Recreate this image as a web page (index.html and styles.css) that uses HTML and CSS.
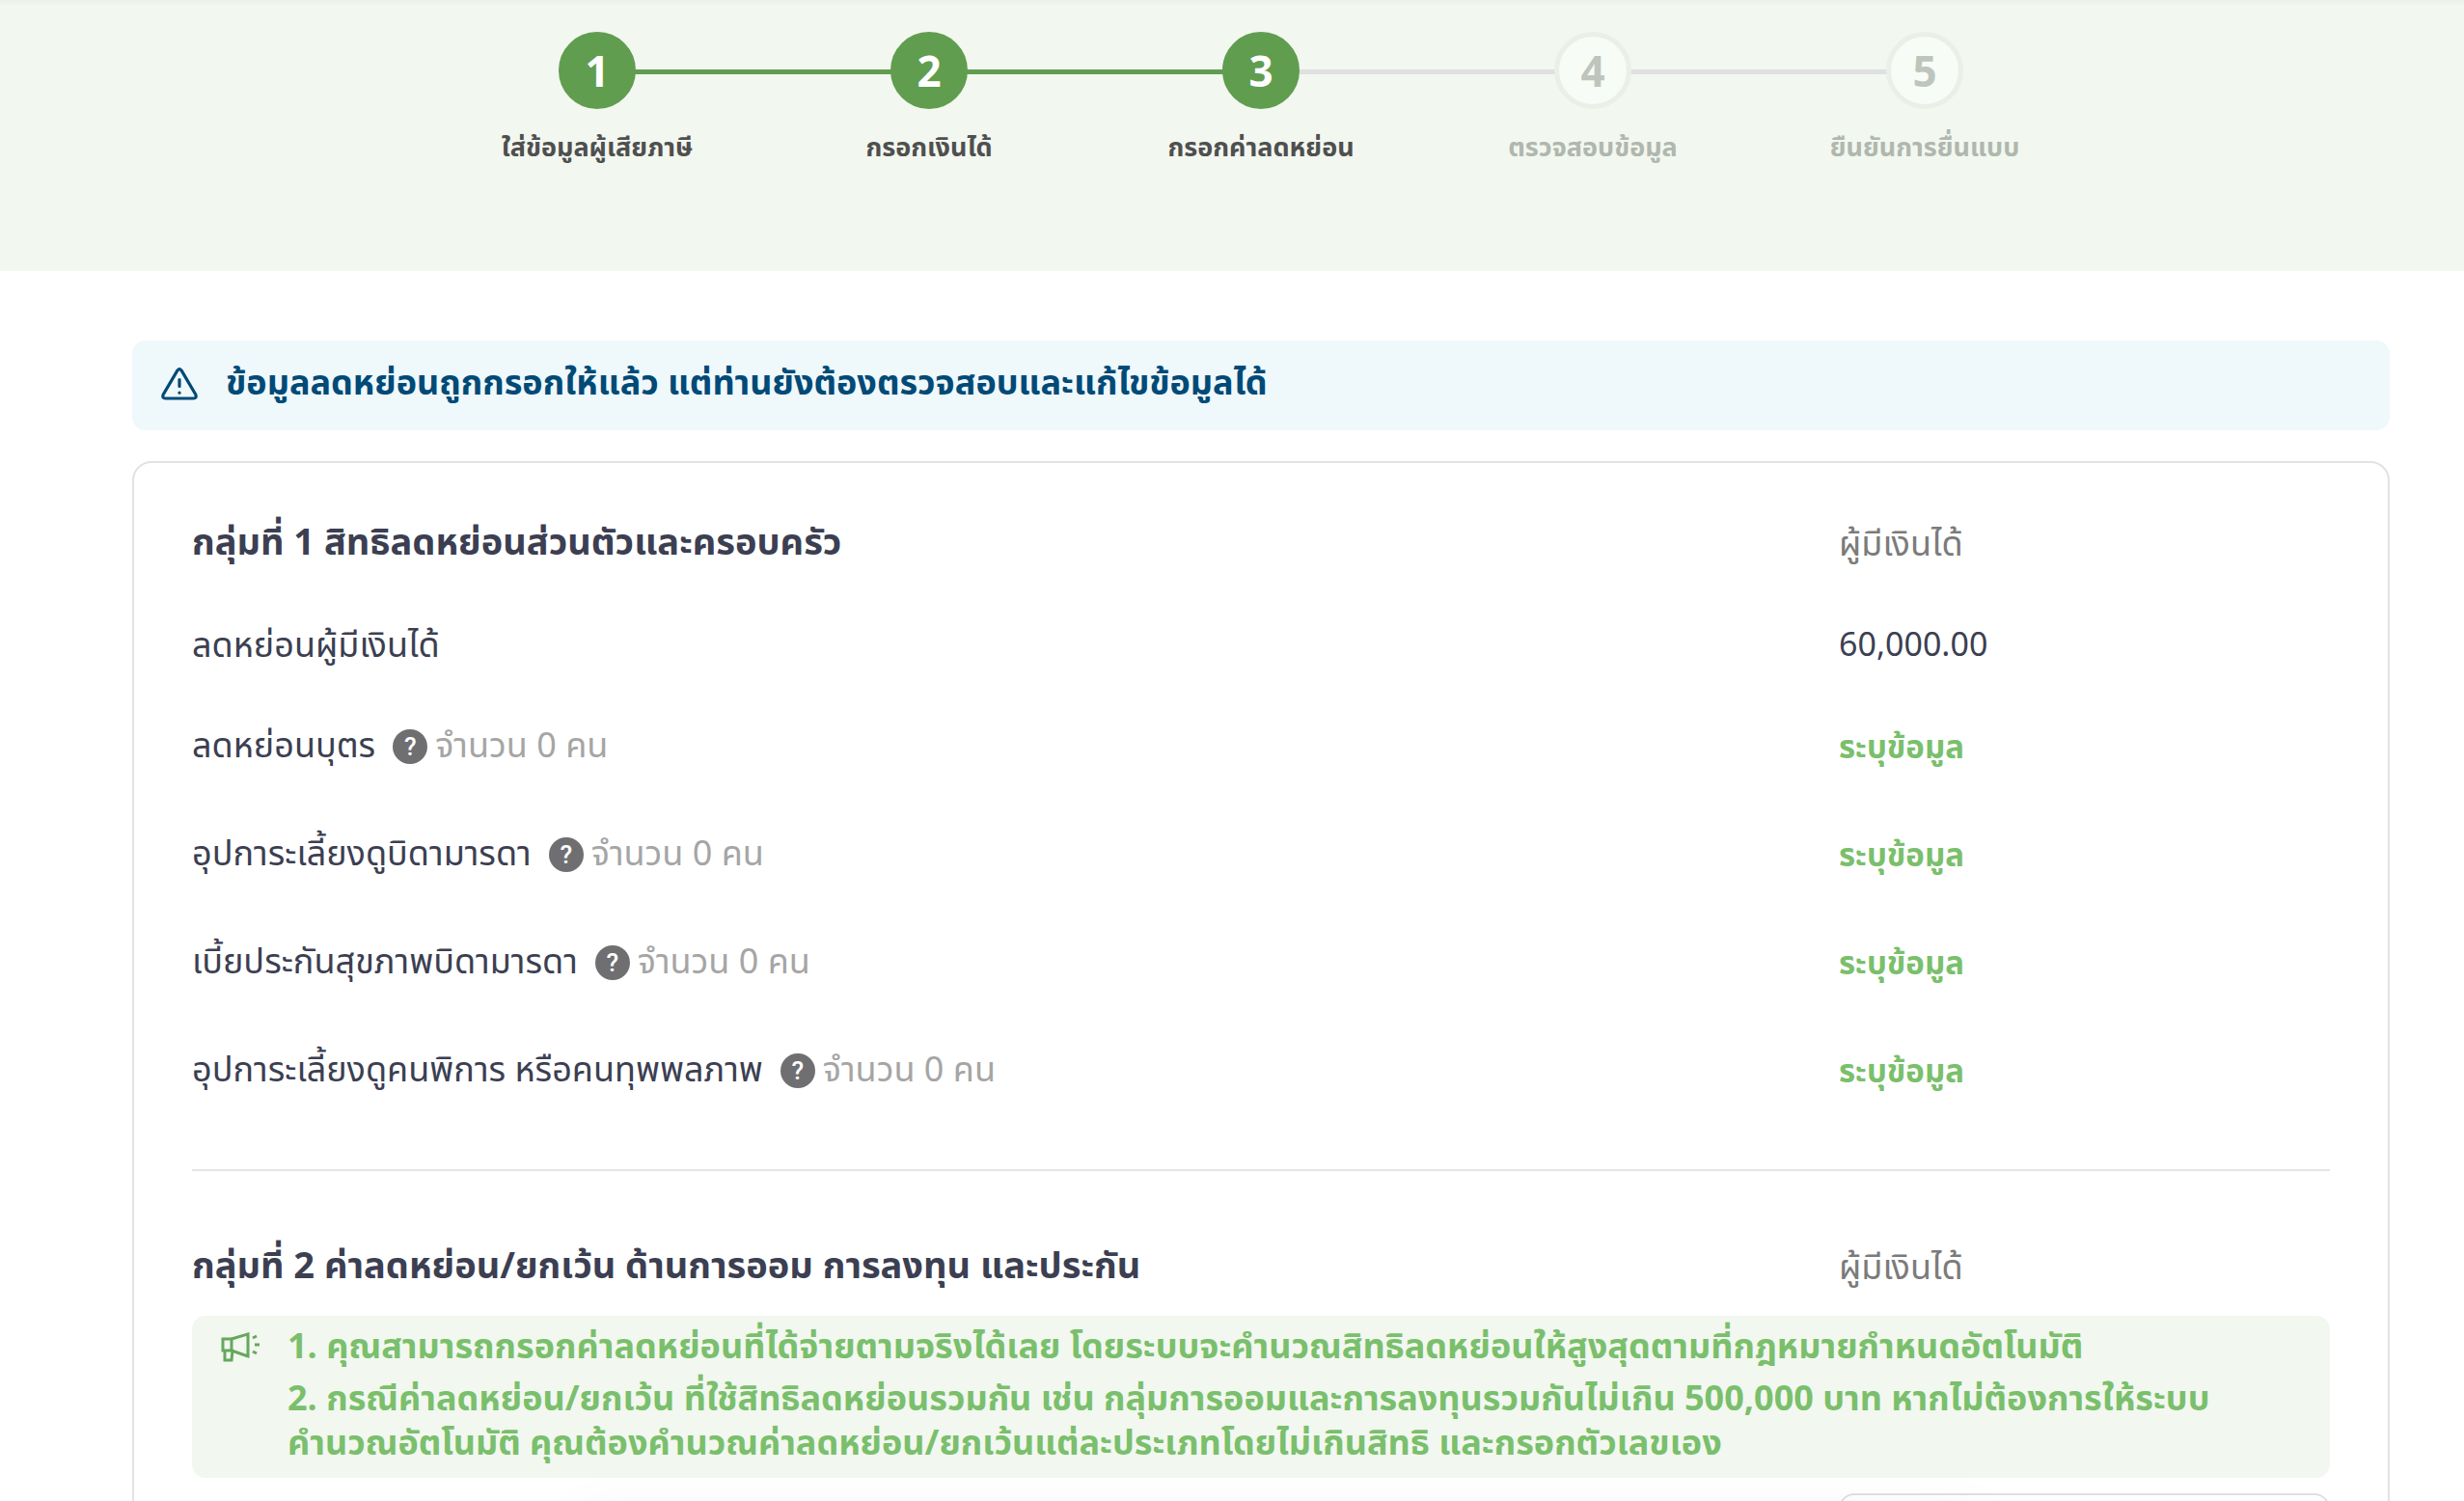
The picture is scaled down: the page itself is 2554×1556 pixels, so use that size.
FILE: index.html
```html
<!DOCTYPE html>
<html lang="th">
<head>
    <meta charset="UTF-8">
    <meta name="viewport" content="width=device-width, initial-scale=1.0">
    <title>กรอกค่าลดหย่อน</title>
    <link rel="stylesheet" href="styles.css">
</head>
<body>
    <header class="steps-bar">
        <ol class="steps">
            <li class="step done"><span class="circle">1</span><span class="step-label">ใส่ข้อมูลผู้เสียภาษี</span></li>
            <li class="step done"><span class="circle">2</span><span class="step-label">กรอกเงินได้</span></li>
            <li class="step done"><span class="circle">3</span><span class="step-label">กรอกค่าลดหย่อน</span></li>
            <li class="step"><span class="circle">4</span><span class="step-label">ตรวจสอบข้อมูล</span></li>
            <li class="step"><span class="circle">5</span><span class="step-label">ยืนยันการยื่นแบบ</span></li>
        </ol>
    </header>

    <main class="content">
        <div class="alert">
            <svg class="alert-icon" viewBox="0 0 38 34" fill="none" stroke="currentColor" stroke-width="3.2" stroke-linecap="round" stroke-linejoin="round">
                <path d="M17 2.900 L2.200 28 Q0.800 32 4.500 32 H33.500 Q37.200 32 35.800 28 L21 2.900 Q19 0.500 17 2.900 Z"/>
                <path d="M19 12.500 V19.500"/>
                <path d="M19 26 V26.200"/>
            </svg>
            <p>ข้อมูลลดหย่อนถูกกรอกให้แล้ว แต่ท่านยังต้องตรวจสอบและแก้ไขข้อมูลได้</p>
        </div>

        <div class="card">
            <section class="group">
                <div class="row head">
                    <h2>กลุ่มที่ 1 สิทธิลดหย่อนส่วนตัวและครอบครัว</h2>
                    <span class="owner">ผู้มีเงินได้</span>
                </div>
                <div class="row first">
                    <span>ลดหย่อนผู้มีเงินได้</span>
                    <span class="amount">60,000.00</span>
                </div>
                <div class="row">
                    <div class="item"><span>ลดหย่อนบุตร</span><button type="button" class="help">?</button><span class="count">จำนวน 0 คน</span></div>
                    <a href="#" class="edit">ระบุข้อมูล</a>
                </div>
                <div class="row">
                    <div class="item"><span>อุปการะเลี้ยงดูบิดามารดา</span><button type="button" class="help">?</button><span class="count">จำนวน 0 คน</span></div>
                    <a href="#" class="edit">ระบุข้อมูล</a>
                </div>
                <div class="row">
                    <div class="item"><span>เบี้ยประกันสุขภาพบิดามารดา</span><button type="button" class="help">?</button><span class="count">จำนวน 0 คน</span></div>
                    <a href="#" class="edit">ระบุข้อมูล</a>
                </div>
                <div class="row">
                    <div class="item"><span>อุปการะเลี้ยงดูคนพิการ หรือคนทุพพลภาพ</span><button type="button" class="help">?</button><span class="count">จำนวน 0 คน</span></div>
                    <a href="#" class="edit">ระบุข้อมูล</a>
                </div>
            </section>

            <section class="group saving">
                <div class="row head">
                    <h2>กลุ่มที่ 2 ค่าลดหย่อน/ยกเว้น ด้านการออม การลงทุน และประกัน</h2>
                    <span class="owner">ผู้มีเงินได้</span>
                </div>
                <div class="notice">
                    <svg class="notice-icon" viewBox="0 0 40 32" fill="none" stroke="currentColor" stroke-width="3">
                        <path d="M2 8 H11 V20 H2 Z"/>
                        <path d="M11 8 L28 3 V26 L11 20"/>
                        <path d="M4 20 V30 H11 L12 20"/>
                        <path d="M33 7 L37 5 M35 14 H40 M33 21 L37 23"/>
                    </svg>
                    <div class="notice-text">
                        <p>1. คุณสามารถกรอกค่าลดหย่อนที่ได้จ่ายตามจริงได้เลย โดยระบบจะคำนวณสิทธิลดหย่อนให้สูงสุดตามที่กฎหมายกำหนดอัตโนมัติ</p>
                        <p>2. กรณีค่าลดหย่อน/ยกเว้น ที่ใช้สิทธิลดหย่อนรวมกัน เช่น กลุ่มการออมและการลงทุนรวมกันไม่เกิน 500,000 บาท หากไม่ต้องการให้ระบบ<br>คำนวณอัตโนมัติ คุณต้องคำนวณค่าลดหย่อน/ยกเว้นแต่ละประเภทโดยไม่เกินสิทธิ และกรอกตัวเลขเอง</p>
                    </div>
                </div>
                <div class="row field">
                    <span></span>
                    <input type="text" class="money" aria-label="จำนวนเงิน">
                </div>
            </section>
        </div>
    </main>
</body>
</html>
```

FILE: styles.css
```css
* {
    box-sizing: border-box;
}
body {
    margin: 0;
    height: 100vh;
    overflow: hidden;
    background: #fff;
    color: #3c3f52;
    font-family: "Noto Sans Thai", "Noto Sans", sans-serif;
    font-size: 36px;
    line-height: 46px;
}
h2, p, ol {
    margin: 0;
    padding: 0;
}

/* Steps */
.steps-bar {
    height: 281px;
    padding-top: 33px;
    background: linear-gradient(#ebf0e9, #f2f7f0 6px);
}
.steps {
    display: flex;
    justify-content: center;
    padding-left: 60px;
    list-style: none;
}
.step {
    position: relative;
    display: flex;
    flex-direction: column;
    align-items: center;
    gap: 16px;
    width: 344px;
    color: #b0b7ae;
}
.step + .step::before {
    content: "";
    position: absolute;
    top: 39px;
    right: 50%;
    width: 100%;
    height: 5px;
    background: #e0e0e0;
}
.step.done + .done::before {
    background: #609d4f;
}
.circle {
    position: relative;
    z-index: 1;
    width: 80px;
    height: 80px;
    border: 5px solid #eaefe8;
    border-radius: 50%;
    background: #f7fcf6;
    color: #bfc4bd;
    font-family: "Noto Sans", sans-serif;
    font-size: 44px;
    font-weight: bold;
    line-height: 70px;
    text-align: center;
}
.done .circle {
    border-color: #609d4f;
    background: #609d4f;
    color: #fff;
}
.step-label {
    font-size: 27px;
    font-weight: bold;
    line-height: 50px;
    white-space: nowrap;
}
.done .step-label {
    color: #4f4f4f;
}

/* Content */
.content {
    padding: 72px 77px 0 137px;
}
.alert {
    display: flex;
    align-items: center;
    gap: 29px;
    height: 93px;
    padding: 0 30px 4px;
    border-radius: 14px;
    background: #eff8fb;
    color: #004a77;
    font-weight: bold;
}
.alert-icon {
    width: 38px;
    height: 34px;
}
.card {
    margin-top: 32px;
    padding: 46px 60px 0;
    border: 2px solid #e2e2e2;
    border-radius: 20px;
}

/* Rows */
.row {
    display: grid;
    grid-template-columns: 1fr 509px;
    align-items: center;
    height: 112px;
}
.row.head {
    height: 76px;
}
.row.first {
    height: 96px;
    margin-top: 20px;
}
h2 {
    font-size: 38px;
    font-weight: bold;
}
.owner {
    padding-top: 2px;
    color: #7b7b7b;
}
.amount {
    font-size: 34px;
}
.item {
    display: flex;
    align-items: center;
}
.help {
    width: 36px;
    height: 36px;
    margin: 0 8px 0 18px;
    padding: 0;
    border: 0;
    border-radius: 50%;
    background: #6f6f71;
    color: #fff;
    font: 500 26px/36px Roboto, sans-serif;
}
.count {
    color: #a5a5a5;
}
.edit {
    padding-top: 4px;
    color: #7abf6c;
    font-size: 33px;
    font-weight: bold;
    text-decoration: none;
}

/* Saving group */
.saving {
    margin-top: 46px;
    padding-top: 62px;
    border-top: 2px solid #e4e5e6;
}
.notice {
    display: flex;
    gap: 29px;
    margin-top: 12px;
    padding: 10px 30px 12px;
    border-radius: 14px;
    background: #f2f7f0;
    color: #7abf6c;
    font-weight: bold;
}
.notice-icon {
    width: 40px;
    height: 32px;
    margin-top: 6px;
    color: #65a85c;
}
.notice-text p + p {
    margin-top: 8px;
}
.field {
    height: 100px;
    margin-top: 16px;
}
.money {
    width: 100%;
    height: 100px;
    border: 2px solid #e0e0e0;
    border-radius: 16px;
}

/* Soft shade along the bottom edge of the window */
body::after {
    content: "";
    position: fixed;
    right: 500px;
    bottom: -100px;
    left: 600px;
    height: 90px;
    box-shadow: 0 0 60px rgba(0, 0, 0, 0.04);
}
```
